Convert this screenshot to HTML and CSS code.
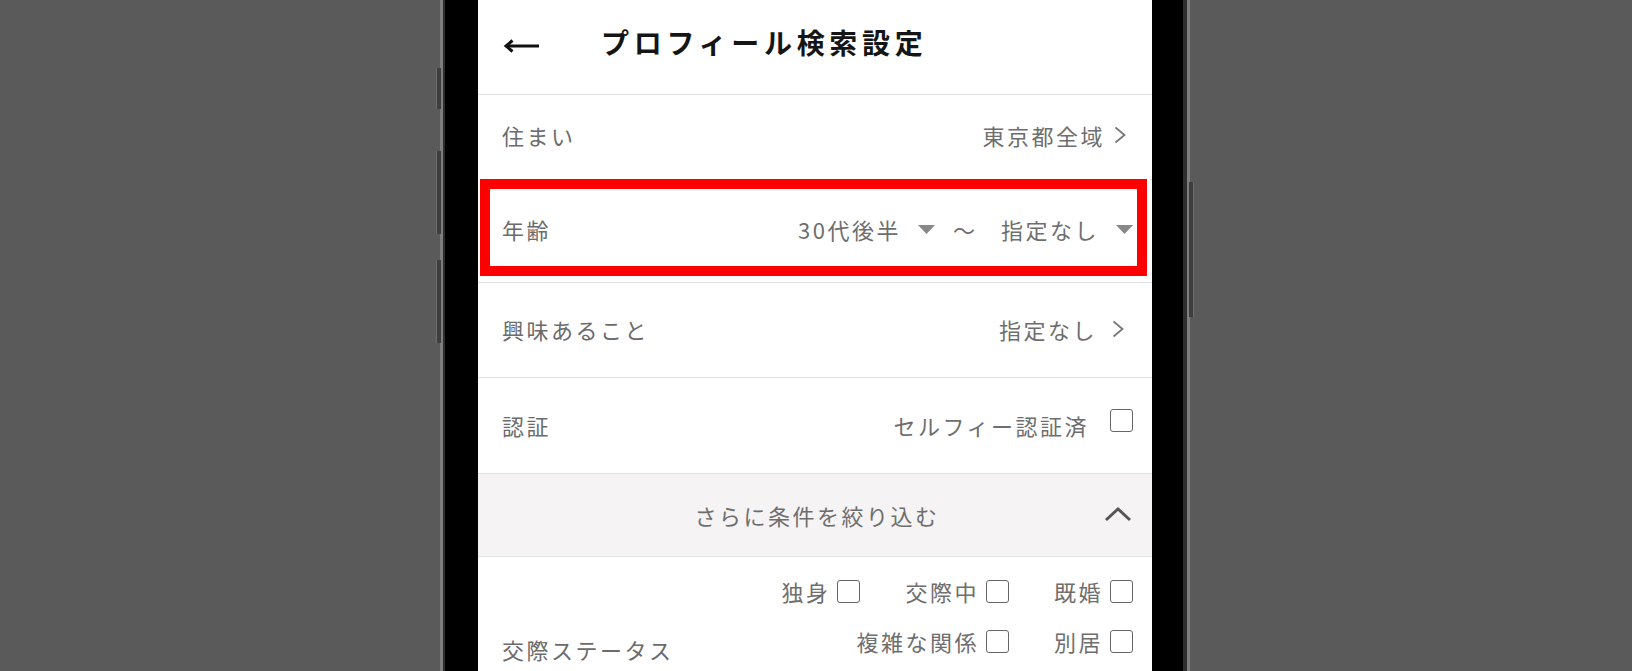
FILE: index.html
```html
<!DOCTYPE html>
<html lang="ja">
<head>
<meta charset="utf-8">
<title>プロフィール検索設定</title>
<link rel="stylesheet" href="styles.css">
</head>
<body>
<div class="phone">
  <span class="side-btn sb1"></span>
  <span class="side-btn sb2"></span>
  <span class="side-btn sb3"></span>
  <span class="side-btn sb4"></span>
  <div class="screen">
    <header class="header">
      <svg class="back" width="36" height="14" viewBox="0 0 36 14"><path d="M3 7H36" stroke="#111" stroke-width="3" fill="none"/><path d="M9.5 1.5L3 7l6.5 5.5" stroke="#111" stroke-width="3" fill="none" stroke-linejoin="miter"/></svg>
      <h1 class="title">プロフィール検索設定</h1>
    </header>

    <div class="row row-home">
      <span class="label">住まい</span>
      <span class="value">東京都全域<svg class="chev" width="14" height="20" viewBox="0 0 14 20"><path d="M2.5 2.5L11.5 10l-9 7.5" stroke="#777" stroke-width="1.8" fill="none"/></svg></span>
    </div>

    <div class="row row-age">
      <span class="label">年齢</span>
      <div class="range">
        <span class="sel">30代後半<svg class="tri" width="17" height="9" viewBox="0 0 17 9"><path d="M0 0H17L8.5 9Z" fill="#888"/></svg></span>
        <span class="tilde">〜</span>
        <span class="sel">指定なし<svg class="tri" width="17" height="9" viewBox="0 0 17 9"><path d="M0 0H17L8.5 9Z" fill="#888"/></svg></span>
      </div>
      <div class="highlight"></div>
    </div>

    <div class="row row-interest">
      <span class="label">興味あること</span>
      <span class="value">指定なし<svg class="chev chev-wide" width="14" height="20" viewBox="0 0 14 20"><path d="M2.5 2.5L11.5 10l-9 7.5" stroke="#777" stroke-width="1.8" fill="none"/></svg></span>
    </div>

    <div class="row row-auth">
      <span class="label">認証</span>
      <span class="value">セルフィー認証済<span class="box box-auth"></span></span>
    </div>

    <div class="more">
      <span class="more-text">さらに条件を絞り込む</span>
      <svg class="up" width="28" height="16" viewBox="0 0 28 16"><path d="M2 14L14 3l12 11" stroke="#555" stroke-width="3" fill="none"/></svg>
    </div>

    <div class="status">
      <span class="label status-label">交際ステータス</span>
      <div class="opts">
        <div class="opt-row">
          <span class="opt">独身<span class="box"></span></span>
          <span class="opt">交際中<span class="box"></span></span>
          <span class="opt">既婚<span class="box"></span></span>
        </div>
        <div class="opt-row">
          <span class="opt">複雑な関係<span class="box"></span></span>
          <span class="opt">別居<span class="box"></span></span>
        </div>
      </div>
    </div>
  </div>
</div>
</body>
</html>
```

FILE: styles.css
```css
html, body {
  margin: 0;
  padding: 0;
}
body {
  background: #5a5a5a;
  height: 671px;
  overflow: hidden;
  font-family: "Noto Sans CJK JP", "Noto Sans", sans-serif;
}
.phone {
  position: relative;
  box-sizing: border-box;
  width: 750px;
  height: 671px;
  margin-left: calc(50% - 376px);
  border-left: 3px solid #7e7e7e;
  border-right: 3px solid #7e7e7e;
  background: #000;
  padding: 0 35px;
  box-shadow: inset 2px 0 0 #2e2e2e, inset -4px 0 0 #2e2e2e;
}
.side-btn {
  position: absolute;
  width: 4px;
  background: #3e3e3e;
  border-left: 1px solid #6c6c6c;
}
.sb1 { left: -7px; top: 68px; height: 41px; }
.sb2 { left: -7px; top: 151px; height: 83px; }
.sb3 { left: -7px; top: 260px; height: 83px; }
.sb4 { right: -7px; top: 182px; height: 135px; border-left: none; border-right: 1px solid #6c6c6c; }

.screen {
  background: #fff;
  height: 671px;
  overflow: hidden;
  color: #6e6e6e;
  font-size: 22px;
  letter-spacing: 2.5px;
}
.header {
  display: flex;
  align-items: center;
  height: 95px;
  box-sizing: border-box;
  padding: 0 0 11px 25px;
  border-bottom: 1px solid #e2e2e2;
}
.back {
  display: block;
  margin-top: 8px;
}
.title {
  margin: 0 0 0 62px;
  font-size: 28px;
  font-weight: 700;
  letter-spacing: 4.7px;
  color: #151515;
}
.row {
  position: relative;
  display: flex;
  align-items: center;
  justify-content: space-between;
  padding: 0 19px 2px 24px;
  border-bottom: 1px solid #e2e2e2;
}
.row-home { height: 80px; padding-bottom: 4px; }
.row-age { height: 98px; padding-bottom: 4px; }
.row-interest { height: 92px; }
.row-auth { height: 93px; }
.label {
  color: #6b6b6b;
}
.value {
  display: flex;
  align-items: center;
}
.chev {
  display: block;
  margin: 0 6px 0 8px;
}
.chev-wide {
  margin-left: 14px;
  margin-right: 8px;
}
.range {
  display: flex;
  align-items: center;
}
.sel {
  display: flex;
  align-items: center;
}
.tri {
  display: block;
  margin-left: 17px;
}
.tilde {
  margin: 0 26px 0 18px;
  letter-spacing: 0;
}
.highlight {
  position: absolute;
  top: -1px;
  left: 2px;
  right: 5px;
  height: 97px;
  box-sizing: border-box;
  border: 10px solid #ff0000;
  box-shadow: 0 0 0 3px #fff;
  pointer-events: none;
}
.box {
  display: block;
  box-sizing: border-box;
  width: 23px;
  height: 23px;
  border: 1.5px solid #666;
  border-radius: 3px;
  background: #fff;
  margin-left: 7px;
}
.box-auth {
  margin-left: 21px;
  margin-bottom: 9px;
}
.more {
  display: grid;
  grid-template-columns: 1fr auto 1fr;
  align-items: center;
  height: 82px;
  padding: 0 20px 0 0;
  background: #f5f3f3;
  border-bottom: 1px solid #e2e2e2;
}
.more-text {
  grid-column: 2;
  padding-left: 24px;
}
.up {
  grid-column: 3;
  justify-self: end;
  display: block;
  margin-top: -2px;
}
.status {
  display: flex;
  justify-content: space-between;
  align-items: flex-start;
  padding: 9px 19px 0 24px;
}
.status-label {
  padding-top: 67px;
}
.opts {
  display: flex;
  flex-direction: column;
  align-items: flex-end;
}
.opt-row {
  display: flex;
  align-items: center;
  gap: 45px;
  height: 50px;
}
.opt {
  display: flex;
  align-items: center;
}
```
